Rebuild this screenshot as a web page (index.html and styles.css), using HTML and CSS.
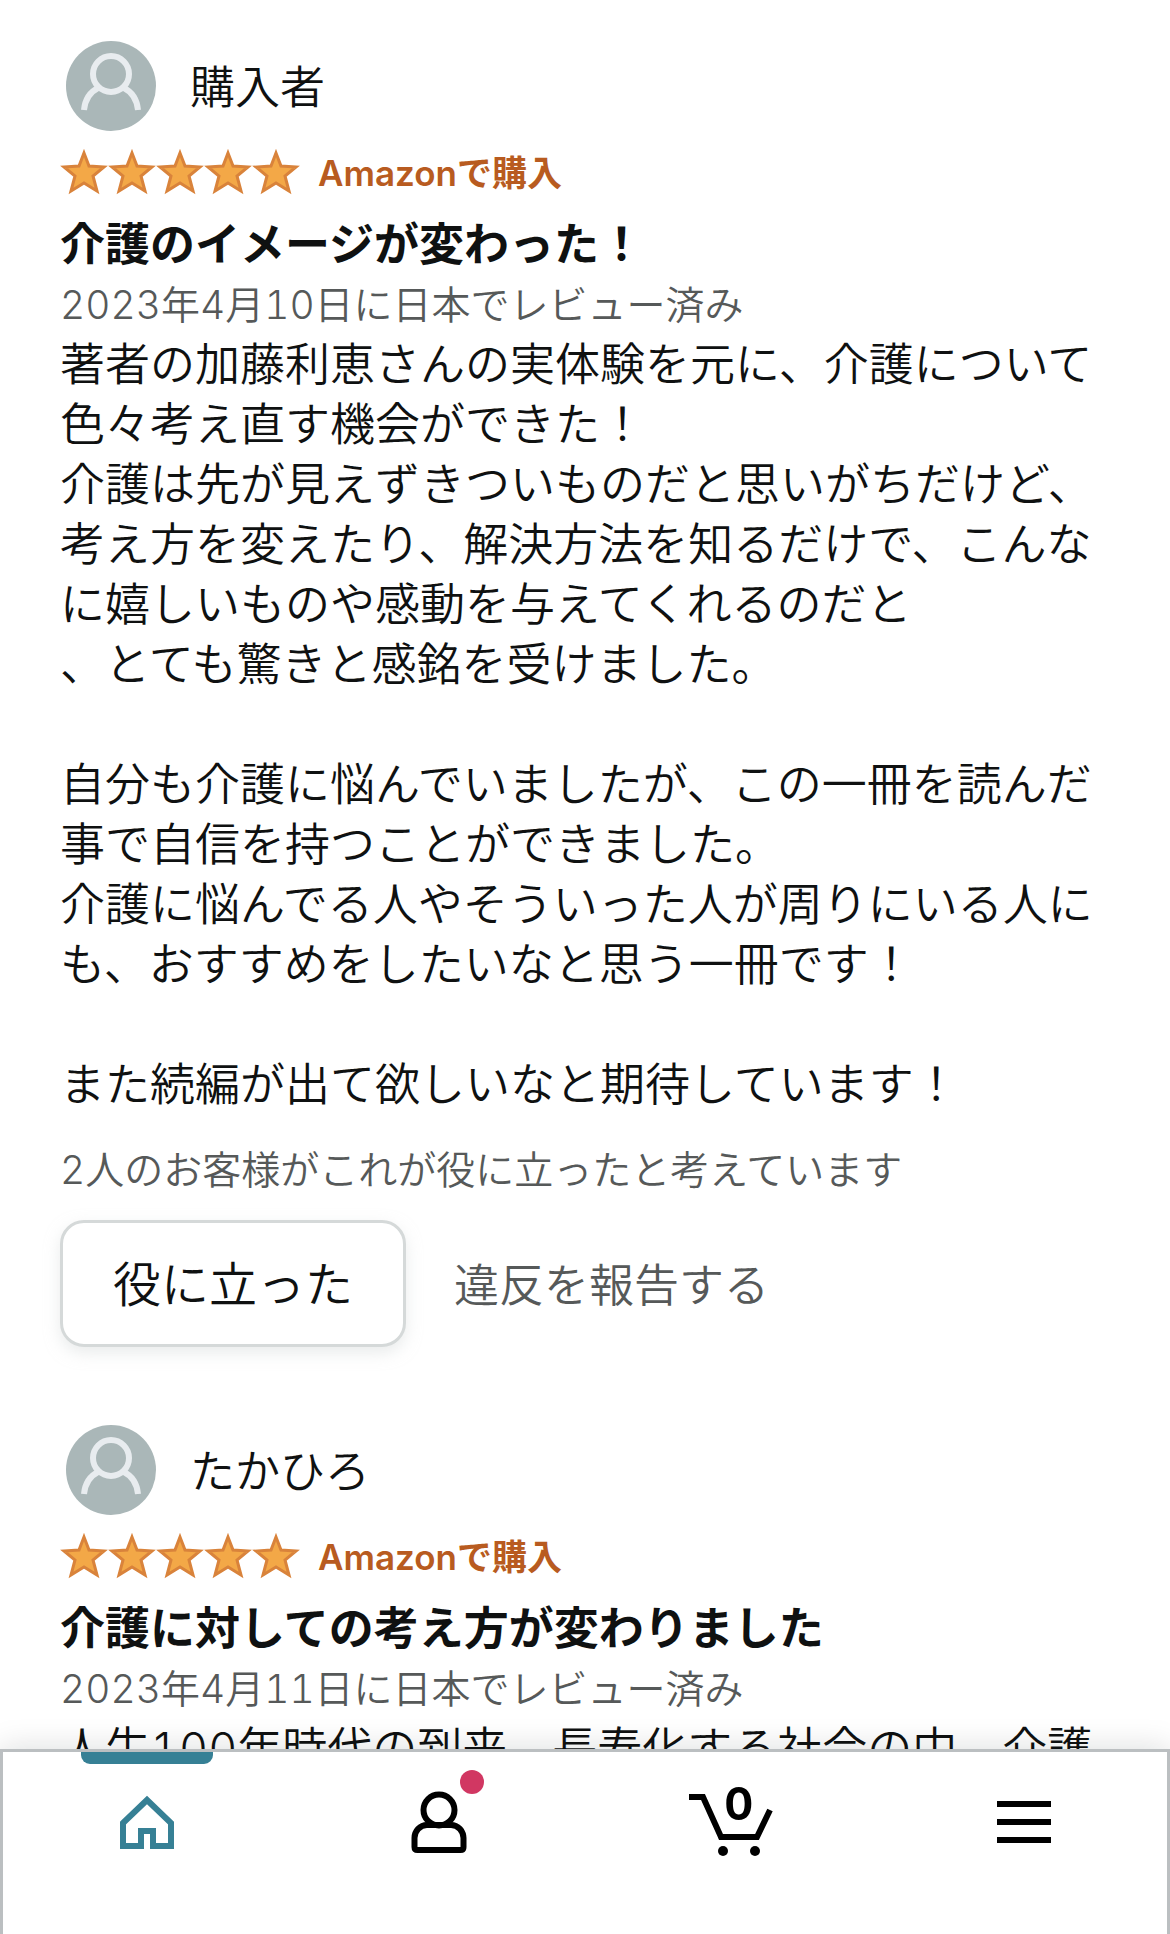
FILE: index.html
```html
<!DOCTYPE html>
<html lang="ja">
<head>
  <meta charset="UTF-8">
  <meta name="viewport" content="width=device-width, initial-scale=1">
  <title>カスタマーレビュー</title>
  <link rel="stylesheet" href="styles.css">
</head>
<body>
  <svg width="0" height="0" class="symbols">
    <symbol id="avatar" viewBox="0 0 90 90">
      <circle cx="45" cy="45" r="45" fill="#aab7b8"/>
      <g fill="none" stroke="#e8ecef" stroke-width="6">
        <circle cx="45" cy="33" r="18"/>
        <path d="M18 69C19 59 24 51 32 47M72 69C71 59 66 51 58 47"/>
      </g>
    </symbol>
    <symbol id="stars" viewBox="0 0 240 48">
      <g fill="#f3a847" stroke="#d9833b" stroke-width="3">
        <path id="star" d="M24 6L29 19L44 20L33 29L37 44L24 36L11 44L15 29L4 20L19 19Z"/>
        <use href="#star" x="48"/>
        <use href="#star" x="96"/>
        <use href="#star" x="144"/>
        <use href="#star" x="192"/>
      </g>
    </symbol>
  </svg>

  <main>
    <article class="review">
      <div class="profile">
        <svg class="avatar"><use href="#avatar"/></svg>
        <span>購入者</span>
      </div>
      <div class="rating">
        <svg class="stars" role="img" aria-label="5つ星のうち5.0"><use href="#stars"/></svg>
        <span class="verified">Amazonで購入</span>
      </div>
      <h2>介護のイメージが変わった！</h2>
      <p class="date">2023年4月10日に日本でレビュー済み</p>
      <p class="text">著者の加藤利恵さんの実体験を元に、介護について色々考え直す機会ができた！<br>
        介護は先が見えずきついものだと思いがちだけど、考え方を変えたり、解決方法を知るだけで、こんなに嬉しいものや感動を与えてくれるのだと<br>
        、とても驚きと感銘を受けました。<br>
        <br>
        自分も介護に悩んでいましたが、この一冊を読んだ事で自信を持つことができました。<br>
        介護に悩んでる人やそういった人が周りにいる人にも、おすすめをしたいなと思う一冊です！<br>
        <br>
        また続編が出て欲しいなと期待しています！</p>
      <p class="helpful">2人のお客様がこれが役に立ったと考えています</p>
      <div class="actions">
        <button type="button">役に立った</button>
        <a href="#">違反を報告する</a>
      </div>
    </article>

    <article class="review">
      <div class="profile">
        <svg class="avatar"><use href="#avatar"/></svg>
        <span>たかひろ</span>
      </div>
      <div class="rating">
        <svg class="stars" role="img" aria-label="5つ星のうち5.0"><use href="#stars"/></svg>
        <span class="verified">Amazonで購入</span>
      </div>
      <h2>介護に対しての考え方が変わりました</h2>
      <p class="date">2023年4月11日に日本でレビュー済み</p>
      <p class="text">人生100年時代の到来、長寿化する社会の中、介護</p>
    </article>
  </main>

  <nav class="tabbar">
    <a href="#" class="active" aria-label="ホーム">
      <svg width="84" height="84" viewBox="0 0 84 84" fill="none" stroke="currentColor" stroke-width="6">
        <path d="M19 36L43 13L67 36V59H49V44H37V59H19Z"/>
        <path d="M40 63V47H46V63Z" fill="#fff" stroke="none"/>
      </svg>
    </a>
    <a href="#" aria-label="アカウント">
      <svg width="84" height="84" viewBox="0 0 84 84" fill="none" stroke="currentColor" stroke-width="6">
        <circle cx="42" cy="23" r="15.5"/>
        <path d="M30 38H54C61 38 66.500 44 66.500 51V60Q66.500 63 63.500 63H20.500Q17.500 63 17.500 60V51C17.500 44 23 38 30 38Z"/>
      </svg>
      <span class="dot"></span>
    </a>
    <a href="#" aria-label="カート">
      <svg width="84" height="84" viewBox="0 0 84 84" fill="none" stroke="currentColor" stroke-width="6">
        <path d="M0 10H14L32 50H68L81 23"/>
        <circle cx="34" cy="64" r="5" fill="currentColor" stroke="none"/>
        <circle cx="66" cy="64" r="5" fill="currentColor" stroke="none"/>
      </svg>
      <span class="count">0</span>
    </a>
    <a href="#" aria-label="メニュー">
      <svg width="84" height="84" viewBox="0 0 84 84" fill="none" stroke="currentColor" stroke-width="6">
        <path d="M15 17H69M15 35H69M15 53H69"/>
      </svg>
    </a>
  </nav>
</body>
</html>
```

FILE: styles.css
```css
* {
  box-sizing: border-box;
}

body {
  margin: 0;
  background: #fff;
  color: #0f1111;
  font-family: Inter, "Noto Sans CJK JP", sans-serif;
  font-size: 45px;
  font-weight: 350;
  font-variant-numeric: tabular-nums;
  line-height: 60px;
}

a {
  color: inherit;
  text-decoration: none;
}

h2,
p {
  margin: 0;
}

.symbols {
  position: absolute;
}

.review {
  padding: 41px 60px 37px;
}

.profile {
  display: flex;
  align-items: center;
  gap: 34px;
  padding-left: 6px;
}

.profile span {
  padding-top: 4px;
}

.avatar {
  width: 90px;
  height: 90px;
}

.rating {
  display: flex;
  align-items: center;
  gap: 18px;
  height: 48px;
  margin: 16px 0 20px;
}

.stars {
  width: 240px;
  height: 48px;
}

.verified {
  padding-top: 4px;
  color: #b85b20;
  font-size: 35px;
  font-weight: 600;
}

h2 {
  font-size: 45px;
  font-weight: 700;
}

.date,
.helpful {
  color: #565959;
  font-size: 39px;
}

.helpful {
  margin: 25px 0 20px;
}

.actions {
  display: flex;
  align-items: center;
  gap: 48px;
}

.actions button {
  height: 127px;
  padding: 2px 50px 0;
  border: 3px solid #d5d9d9;
  border-radius: 24px;
  background: #fff;
  box-shadow: 0 6px 15px rgba(213, 217, 217, 0.5);
  color: inherit;
  font: inherit;
  font-size: 48px;
}

.actions a {
  padding-top: 4px;
  color: #565959;
}

.tabbar {
  position: fixed;
  left: 0;
  right: 0;
  bottom: 0;
  display: flex;
  height: 185px;
  border-top: 3px solid #bbbfc1;
  background: #fff;
  box-shadow: inset 3px 0 #bbbfc1, inset -3px 0 #bbbfc1, 0 0 30px rgba(15, 17, 17, 0.15);
  color: #000;
}

.tabbar a {
  position: relative;
  flex: 1;
  padding-top: 35px;
  text-align: center;
}

.tabbar svg {
  display: block;
  margin: 0 auto;
}

.tabbar .active {
  color: #368095;
}

.tabbar .active::before {
  content: "";
  position: absolute;
  top: 0;
  left: 50%;
  width: 132px;
  height: 12px;
  margin-left: -65px;
  border-radius: 0 0 9px 9px;
  background: #368095;
}

.dot {
  position: absolute;
  top: 18px;
  left: 50%;
  width: 24px;
  height: 24px;
  margin-left: 21px;
  border-radius: 50%;
  background: #d13762;
}

.count {
  position: absolute;
  top: 22px;
  left: 0;
  right: 0;
  padding-left: 15px;
  font-size: 45px;
  font-weight: 700;
}
```
